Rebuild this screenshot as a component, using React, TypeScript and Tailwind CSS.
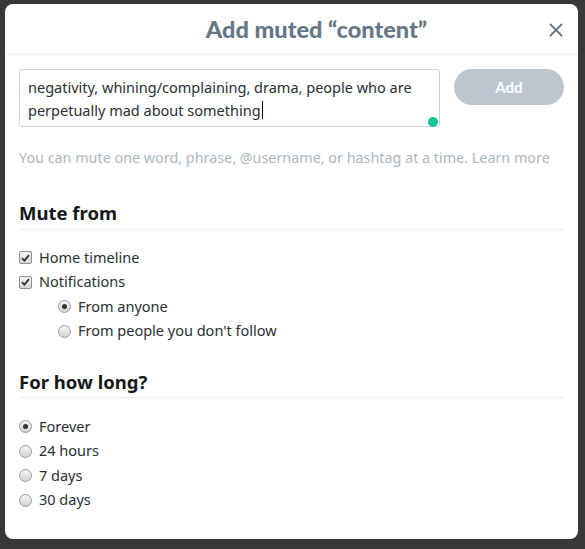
import { ReactNode } from 'react'

function Check() {
  return (
    <span className="flex h-[13px] w-[13px] items-center justify-center rounded-[2px] border border-[#8f8f8f] bg-gradient-to-b from-[#f4f4f4] to-[#d6d6d6]">
      <svg width="9" height="8" viewBox="0 0 9 8">
        <path d="M1 4.2 L3.4 6.6 L8 1.2" fill="none" stroke="#333" strokeWidth="1.8" />
      </svg>
    </span>
  )
}

function Radio({ on }: { on?: boolean }) {
  return (
    <span className="flex h-[13px] w-[13px] items-center justify-center rounded-full border border-[#9a9a9a] bg-gradient-to-b from-[#f6f6f6] to-[#d3d3d3]">
      {on && <span className="h-[5px] w-[5px] rounded-full bg-[#333]" />}
    </span>
  )
}

function Row({ icon, children, indent }: { icon: ReactNode; children: ReactNode; indent?: boolean }) {
  return (
    <div className={`flex h-[24.5px] items-center gap-[7px] ${indent ? 'pl-[39px]' : ''}`}>
      {icon}
      <span className="text-[14.5px] text-[#292f33]">{children}</span>
    </div>
  )
}

export default function App() {
  return (
    <div className="h-[549px] w-[585px] bg-[#37383a] pl-[5px] pt-[4px]" style={{ fontFamily: '"Noto Sans", "Open Sans", sans-serif' }}>
      <div className="h-[535px] w-[573px] rounded-[8px] bg-white">
        {/* HEADER */}
        <div className="relative flex h-[51px] items-center border-b border-[#e6ecf0]">
          <h1
            className="w-full pl-[50px] pt-[2px] text-center text-[23.5px] font-black text-[#657786]"
            style={{ fontFamily: 'Lato, sans-serif' }}
          >
            Add muted “content”
          </h1>
          <button className="absolute right-[14px] top-[18px] text-[#657786]">
            <svg width="16" height="16" viewBox="0 0 16 16">
              <path d="M2 2 L14 14 M14 2 L2 14" stroke="#657786" strokeWidth="1.8" />
            </svg>
          </button>
        </div>

        <div className="px-[14px]">
          {/* INPUT */}
          <div className="mt-[14px] flex gap-[14px]">
            <div className="relative h-[58px] w-[421px] rounded-[3px] border border-[#ccd6dd] px-[8px] pt-[6px] text-[14.5px] leading-[22px] text-[#292f33]">
              negativity, whining/complaining, drama, people who are perpetually mad about something
              <span className="ml-px inline-block h-[18px] w-px translate-y-[3px] bg-black" />
              <span className="absolute bottom-[-1px] right-[1px] h-[10px] w-[10px] rounded-full bg-[#15c39a]" />
            </div>
            <button
              className="h-[36px] w-[110px] rounded-full bg-[#bcc6ce] text-[15px] font-bold text-white"
              style={{ fontFamily: 'Lato, sans-serif' }}
            >
              Add
            </button>
          </div>

          <p className="mt-[20px] text-[14.35px] text-[#aab8c2]">
            You can mute one word, phrase, @username, or hashtag at a time. Learn more
          </p>

          {/* MUTE FROM */}
          <h2 className="mt-[32px] border-b border-[#e6ecf0] pb-[4px] text-[18.5px] font-bold leading-[24px] text-[#14171a]">
            Mute from
          </h2>
          <div className="mt-[16px]">
            <Row icon={<Check />}>Home timeline</Row>
            <Row icon={<Check />}>Notifications</Row>
            <Row indent icon={<Radio on />}>From anyone</Row>
            <Row indent icon={<Radio />}>From people you don't follow</Row>
          </div>

          {/* FOR HOW LONG */}
          <h2 className="mt-[26px] border-b border-[#e6ecf0] pb-[3px] text-[18.5px] font-bold leading-[24px] text-[#14171a]">
            For how long?
          </h2>
          <div className="mt-[17px]">
            <Row icon={<Radio on />}>Forever</Row>
            <Row icon={<Radio />}>24 hours</Row>
            <Row icon={<Radio />}>7 days</Row>
            <Row icon={<Radio />}>30 days</Row>
          </div>
        </div>
      </div>
    </div>
  )
}
